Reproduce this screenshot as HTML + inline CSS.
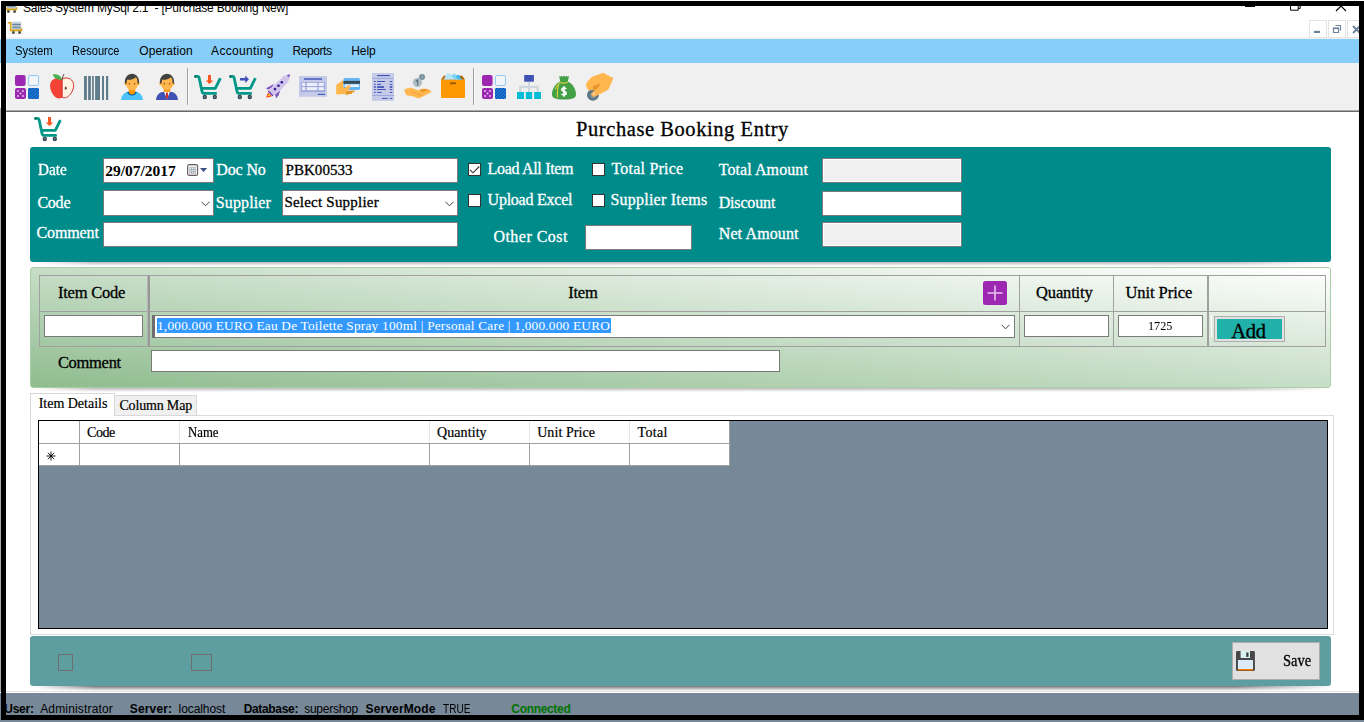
<!DOCTYPE html>
<html><head><meta charset="utf-8"><title>Purchase Booking New</title>
<style>
html,body{margin:0;padding:0;}
body{width:1364px;height:722px;overflow:hidden;background:#fff;position:relative;font-family:"Liberation Sans",sans-serif;}
.a{position:absolute;box-sizing:border-box;}
.t{position:absolute;white-space:pre;line-height:1;}
.sf{font-family:"Liberation Serif",serif;}
.k{-webkit-text-stroke:0.3px currentColor;}
.k2{-webkit-text-stroke:0.2px currentColor;}
.ss{font-family:"Liberation Sans",sans-serif;}
.inp{position:absolute;box-sizing:border-box;background:#fff;border:1px solid #7a7a7a;}
.ro{background:#f0f0f0;border:1px solid #7a7a7a;box-shadow:inset 0 0 0 1px #fff;}
.cb{position:absolute;box-sizing:border-box;width:13px;height:13px;background:#fff;border:1px solid #333;}
.gl{position:absolute;background:#a0a0a0;}
.ic{position:absolute;overflow:visible;}
</style></head>
<body>
<!-- outer desktop slivers -->
<div class="a" style="left:0;top:39px;width:1px;height:24px;background:#87cefa"></div>
<div class="a" style="left:0;top:108px;width:1px;height:584px;background:#ababab"></div>
<div class="a" style="left:0;top:693px;width:1364px;height:29px;background:#778899"></div>
<!-- black frame -->
<div class="a" style="left:1px;top:1px;width:1363px;height:719px;background:#000"></div>
<!-- window client -->
<div class="a" id="win" style="left:6px;top:6px;width:1353px;height:709px;background:#fff;overflow:hidden">
</div>
<!-- strips -->
<div class="a" style="left:6px;top:37px;width:1353px;height:2px;background:#f3f0ee"></div>
<div class="a" style="left:6px;top:39px;width:1353px;height:24px;background:#87cefa"></div>
<div class="a" style="left:6px;top:63px;width:1353px;height:47px;background:#f0f0f0"></div>
<div class="a" style="left:6px;top:63px;width:1px;height:47px;background:#fff"></div>
<div class="a" style="left:6px;top:110px;width:1353px;height:1px;background:#a9a9a9"></div>
<div class="a" style="left:6px;top:111px;width:1353px;height:1px;background:#696969"></div>
<!-- toolbar separators -->
<div class="a" style="left:187px;top:68px;width:1px;height:37px;background:#a0a0a0"></div>
<div class="a" style="left:188px;top:68px;width:1px;height:37px;background:#fafafa"></div>
<div class="a" style="left:473px;top:68px;width:1px;height:37px;background:#a0a0a0"></div>
<div class="a" style="left:474px;top:68px;width:1px;height:37px;background:#fafafa"></div>
<!-- MDI buttons -->
<div class="a" style="left:1309px;top:20px;width:18px;height:18px;border:1px solid #e3e3e3;background:#fff"></div>
<div class="a" style="left:1328px;top:20px;width:18px;height:18px;border:1px solid #e3e3e3;background:#fff"></div>
<div class="a" style="left:1347px;top:20px;width:12px;height:18px;border:1px solid #e3e3e3;border-right:0;background:#fff"></div>
<!-- title icon (clipped) + MDI icon -->
<svg width="0" height="0" style="position:absolute"><defs><g id="appico">
<rect x="5.200" y=".9" width="8.500" height="7.800" fill="#aebfcd"/>
<rect x="5.200" y=".9" width="8.500" height="1" fill="#cfdbe4"/>
<rect x="5.200" y="3" width="8.500" height=".8" fill="#56788f"/><rect x="5.200" y="5.800" width="8.500" height=".8" fill="#56788f"/>
<path d="M.8 1.100H4.500V8.400H13.700V7H15.100V10.300H2.900V2.500H.8Z" fill="#d9a514"/>
<rect x="5.200" y="10.300" width="2.400" height="2.400" fill="#3b3a22"/><rect x="11.400" y="10.300" width="2.400" height="2.400" fill="#3b3a22"/>
</g></defs></svg>
<div class="a" style="left:6px;top:6px;width:14px;height:8px;overflow:hidden"><svg class="ic" style="left:-4.300px;top:-5.600px" width="16" height="14" viewBox="0 0 16 14"><use href="#appico"/></svg></div>
<svg class="ic" style="left:7px;top:21px" width="16" height="14" viewBox="0 0 16 14"><rect x=".3" y=".2" width="15.400" height="13.600" fill="#f6f6f6"/><use href="#appico"/></svg>
<!-- window controls (clipped by frame) -->
<svg class="ic" style="left:1240px;top:0px" width="116" height="14" viewBox="0 0 116 14">
<rect x="5" y="5" width="10" height="2" fill="#000"/>
<path d="M50.5 4V10.2H58.2V4M58.2 8.4H60.2V4" fill="none" stroke="#000" stroke-width="1"/>
<path d="M96 11L101 6L106 11" fill="none" stroke="#000" stroke-width="1.1"/>
</svg>
<!-- MDI button glyphs -->
<svg class="ic" style="left:1309px;top:20px" width="50" height="18" viewBox="0 0 50 18">
<rect x="5" y="10.8" width="6" height="2.2" fill="#6d8199"/>
<path d="M26.5 5.5H31.5V10.5" fill="none" stroke="#6d8199" stroke-width="1.2"/>
<path d="M24.5 8.3H29.5V12.5H24.5Z" fill="none" stroke="#6d8199" stroke-width="1.2"/><rect x="24" y="7.5" width="6" height="1.6" fill="#6d8199"/>
<path d="M44 6L51 13M51 6L44 13" fill="none" stroke="#6d8199" stroke-width="1.8"/>
</svg>
<!-- toolbar icons -->
<svg width="0" height="0" style="position:absolute"><defs>
<pattern id="hat" width="2.2" height="2.2" patternUnits="userSpaceOnUse" patternTransform="rotate(-45)"><rect width="2.2" height="2.2" fill="#1e88e5"/><rect width="2.2" height="1" fill="#0d47a1"/></pattern>
<g id="dash">
<rect x="0" y="0" width="10.6" height="11" rx="2" fill="#9c27b0"/>
<rect x="13.5" y="0.5" width="10" height="10" rx="1.6" fill="#f1f5fa" stroke="#90caf9" stroke-width="1"/>
<rect x="0" y="13" width="11" height="11" rx="2" fill="#9c27b0"/>
<g fill="#ecd0f1"><rect x="2.2" y="15.2" width="1.6" height="1.6"/><rect x="7.2" y="15.2" width="1.6" height="1.6"/><rect x="4.7" y="17.7" width="1.6" height="1.6"/><rect x="2.2" y="20.2" width="1.6" height="1.6"/><rect x="7.2" y="20.2" width="1.6" height="1.6"/></g>
<rect x="13" y="13" width="11" height="11" rx="1.2" fill="url(#hat)"/>
</g>
<g id="cart">
<path d="M1.2 1.4H3.4Q4.8 1.4 5.1 2.7L8 16.4Q8.4 18.4 10.2 18.4H22.8M7.4 13.3H21.3L26.4 3.2" fill="none" stroke="#009688" stroke-width="2.8" stroke-linejoin="round"/>
<circle cx="1.3" cy="1.4" r="1.25" fill="#00695c"/>
<circle cx="10.8" cy="22" r="2.2" fill="#37474f"/><circle cx="20.8" cy="22" r="2.2" fill="#37474f"/>
<circle cx="10.8" cy="22" r=".9" fill="#607d8b"/><circle cx="20.8" cy="22" r=".9" fill="#607d8b"/>
</g>
<g id="head">
<circle cx="4.600" cy="10.900" r="1.250" fill="#ffa726"/><circle cx="17.400" cy="10.900" r="1.250" fill="#ffa726"/>
<path d="M4.700 9.500C4.700 14 7.500 17.100 11 17.100S17.300 14 17.300 9.500C17.300 5.500 15 2.500 11 2.500S4.700 5.500 4.700 9.500Z" fill="#ffb74d"/>
<path d="M3.900 10.600C3.300 4.500 6.800 .7 11 .7C15.200 .7 18.700 4.500 18.100 10.600L16.500 10.600C16.600 8 16.300 6 15 4.300C12 6.500 8.500 7.200 6.100 6.700C5.700 8 5.600 9.300 5.700 10.600Z" fill="#424242"/>
<circle cx="8.400" cy="10.700" r=".75" fill="#784719"/><circle cx="13.600" cy="10.700" r=".75" fill="#784719"/>
</g>
</defs></svg>
<svg class="ic" style="left:15px;top:75px" width="24" height="24"><use href="#dash"/></svg>
<svg class="ic" style="left:482px;top:75px" width="24" height="24"><use href="#dash"/></svg>
<!-- apple -->
<svg class="ic" style="left:50px;top:74px" width="25" height="26" viewBox="0 0 25 26">
<path d="M12.200 5.200C8.500 3 3.500 3.800 1.200 7.500C-1.200 11.500 0.600 17.500 3.600 21.300C6.200 24.600 9 25.200 12.200 23.600Z" fill="#f44336"/>
<path d="M12.200 5C15.500 3.200 20.300 3.700 22.500 7.200C24.800 11 23.300 16.500 20.300 20.300C17.800 23.500 15 24.300 12.200 23.400Z" fill="#fff3e0" stroke="#d32f2f" stroke-width="1"/>
<path d="M12 5.600C11.500 2.500 8 -.3 2.800 .4C4 4.300 8 6.200 12 5.600Z" fill="#4caf50"/>
<path d="M12.200 5.500C12.500 3.500 13 1.800 13.900 .2" fill="none" stroke="#5d4037" stroke-width="1"/>
<path d="M15.700 12.300C17 13.800 17.300 15.300 15.700 15.800C14.100 15.300 14.400 13.800 15.700 12.300Z" fill="#5d4037"/>
</svg>
<!-- barcode -->
<svg class="ic" style="left:84px;top:76px" width="25" height="24" viewBox="0 0 25 24">
<g fill="#607d8b"><rect x="0" y="0" width="2.9" height="24"/><rect x="4.100" y="0" width="2.8" height="24"/><rect x="8.100" y="0" width="1.700" height="24"/><rect x="11.100" y="0" width="4.900" height="24"/><rect x="18" y="0" width="2" height="24"/><rect x="22" y="0" width="2.200" height="24"/></g>
</svg>
<!-- person -->
<svg class="ic" style="left:121px;top:73px" width="22" height="28" viewBox="0 0 22 28">
<path d="M.1 27C.1 22 4 18.800 8 18.800H14C18 18.800 21.900 22 21.900 27Z" fill="#4fc3f7"/>
<path d="M6.300 18.800C6.500 23.600 15.500 23.600 15.700 18.800Z" fill="#01579b"/>
<path d="M7.800 15V19C7.800 22.200 14.200 22.200 14.200 19V15Z" fill="#ff9800"/>
<use href="#head"/>
</svg>
<!-- businessman -->
<svg class="ic" style="left:156px;top:73px" width="22" height="28" viewBox="0 0 22 28">
<path d="M.1 27C.1 22 4 18.800 8 18.800H14C18 18.800 21.900 22 21.900 27Z" fill="#3f51b5"/>
<path d="M8 18.800H14L11 25.900Z" fill="#fff"/>
<path d="M10.100 19.600H11.900L12.200 24.300L11 25.900L9.800 24.300Z" fill="#d32f2f"/>
<rect x="7.800" y="15" width="6.400" height="3.800" fill="#ff9800"/>
<use href="#head"/>
</svg>
<!-- cart down -->
<svg class="ic" style="left:194px;top:75px" width="28" height="25" viewBox="0 0 28 25"><use href="#cart"/>
<path d="M14 0H17V5.500H19.300L15.500 9L11.700 5.500H14Z" fill="#ff5722"/></svg>
<!-- cart right -->
<svg class="ic" style="left:229px;top:75px" width="28" height="25" viewBox="0 0 28 25"><use href="#cart"/>
<path d="M11 3H16.200V.4L20 4.200L16.200 8V5.400H11Z" fill="#3f51b5"/></svg>
<!-- rocket -->
<svg class="ic" style="left:265px;top:74px" width="26" height="25" viewBox="0 0 26 25">
<path d="M8.900 9.900L1 14.300L3.200 15.800L7 13.200Z" fill="#7e57c2"/>
<path d="M15.400 16.200L13.500 21.600L11.100 24.200L10 20.400Z" fill="#7e57c2"/>
<path d="M1.200 23.700L3.100 18.500L7 22.200Z" fill="#ff3d00"/><path d="M2.700 22.300L3.900 20L5.500 21.800Z" fill="#ffeb3b"/>
<path d="M25 .2C22 .6 19.500 1.500 18.100 2.500L3.500 16.800L8.100 21.800L15 16.400C19 13 23 8.500 23.900 6C24.600 4 24.900 2 25 .2Z" fill="#d1c4e9"/>
<path d="M25 .2L21.700 1.300L24.200 3.500Z" fill="#7e57c2"/>
<path d="M3.300 17L7.900 21.900" stroke="#5e35b1" stroke-width="1.300"/>
<circle cx="16.800" cy="8.300" r="1.300" fill="#311b92"/><circle cx="13.500" cy="11.800" r="1.300" fill="#311b92"/><circle cx="10" cy="15.100" r="1.300" fill="#311b92"/>
</svg>
<!-- invoice table -->
<svg class="ic" style="left:299px;top:76px" width="28" height="21" viewBox="0 0 28 21">
<rect width="28" height="20.800" fill="#c5cae9"/><rect x="4.900" y="2.100" width="18.200" height="1.800" fill="#5c6bc0"/>
<rect x="1.900" y="6" width="24.200" height="10" fill="#9fa8da"/>
<g fill="#eceefa"><rect x="3.100" y="6.900" width="3.200" height="3.100"/><rect x="7.800" y="6.900" width="10.500" height="3.100"/><rect x="19.600" y="6.900" width="5.300" height="3.100"/><rect x="3.100" y="11.100" width="3.200" height="3.100"/><rect x="7.800" y="11.100" width="10.500" height="3.100"/><rect x="19.600" y="11.100" width="5.300" height="3.100"/></g>
<rect x="18.800" y="17.800" width="7.300" height="1.100" fill="#3f51b5"/>
</svg>
<!-- hand with card -->
<svg class="ic" style="left:336px;top:78px" width="25" height="17" viewBox="0 0 25 17">
<path d="M9.100 12.800L18.700 12.400L18.300 14.300L16 14.700L15.600 15.900L12.500 16L12.100 16.800H9.500Z" fill="#e69329"/>
<rect x="7.400" y=".1" width="16.600" height="11.900" rx="1.600" fill="#64b5f6"/><rect x="7.400" y="2.900" width="16.600" height="2.900" fill="#37474f"/><rect x="8.800" y="6.400" width="14.200" height="2.600" fill="#e3f2fd"/>
<path d="M.2 7L6.800 2L7.500 10.100H8.700L11.800 7.400C13 6.500 15.300 7 14.800 9.300L10.200 14.300L8.700 15.900L.2 16.600Z" fill="#ffb74d"/>
<ellipse cx="13.800" cy="8.100" rx="1.100" ry=".8" fill="#ffcdd2" transform="rotate(-30 13.800 8.100)"/>
</svg>
<!-- receipt -->
<svg class="ic" style="left:372px;top:73px" width="22" height="28" viewBox="0 0 22 28">
<rect width="22" height="27.800" fill="#c5cae9"/><rect y="4.900" width="22" height="1" fill="#9fa8da"/><rect y="22" width="22" height="1" fill="#9fa8da"/>
<g fill="#3f51b5"><rect x="5.100" y="2" width="12.700" height="1.100"/>
<rect x="2" y="8" width="1.700" height="1"/><rect x="5.100" y="8" width="7.900" height="1"/><rect x="17.800" y="8" width="2.500" height="1"/>
<rect x="2" y="10.900" width="1.700" height="1"/><rect x="5.100" y="10.900" width="3.900" height="1"/><rect x="17.800" y="10.900" width="2.500" height="1"/>
<rect x="2" y="13.200" width="1.700" height="1.700"/><rect x="5.100" y="13.200" width="6.900" height="1.700"/><rect x="17.800" y="13.200" width="2.500" height="1.700"/>
<rect x="2" y="16" width="1.700" height="1"/><rect x="5.100" y="16" width="8.700" height="1"/><rect x="17.800" y="16" width="2.500" height="1"/>
<rect x="2" y="18.900" width="1.700" height="1"/><rect x="5.100" y="18.900" width="4.700" height="1"/><rect x="17.800" y="18.900" width="2.500" height="1"/>
<rect x="9.900" y="24.900" width="5.800" height="1"/><rect x="17.800" y="24.900" width="2.500" height="1"/></g>
</svg>
<!-- hand with coins -->
<svg class="ic" style="left:404px;top:74px" width="28" height="25" viewBox="0 0 28 25">
<circle cx="18" cy="2.900" r="3" fill="#78909c"/><rect x="17.700" y="1.400" width=".9" height="2.600" fill="#b0bec5"/>
<circle cx="13.400" cy="8.600" r="4.600" fill="#b0bec5"/><path d="M11.700 7.400L13.700 6V11.400" fill="none" stroke="#546e7a" stroke-width="1.200"/>
<path d="M.4 16L2.700 14.700L7 14L14 16.500L16 15.800L18.600 15L22.700 15.200L26.300 16.500L27 18.100L15 24L12.900 23.700L8.800 21.900L2.700 21.100L.9 17.500Z" fill="#ffb74d" stroke="#ffb74d" stroke-width=".6" stroke-linejoin="round"/>
<path d="M16 15.800L18.600 15L22.700 15.200L24.700 16L18.600 18.600L16.500 17.500Z" fill="#eb9a30"/>
<path d="M8.300 18.300L17.500 21.400" stroke="#e69329" stroke-width=".9" stroke-dasharray="1.400 .7"/>
</svg>
<!-- box -->
<svg class="ic" style="left:441px;top:72px" width="24" height="27" viewBox="0 0 24 27">
<path d="M0 7.700L2.800 3.700H21.300L24 7.700Z" fill="#b26500"/>
<path d="M2.600 7.700L6.200 .8L21.200 7.700Z" fill="#b3e5fc"/><path d="M10.200 3.900L13.100 1.300L20.500 7.700H14Z" fill="#81d4fa"/><path d="M14.700 4.300L17.400 2.600L21.200 7.700H17.500Z" fill="#3db8f5"/>
<rect x="0" y="7.700" width="24" height="18.300" rx="1" fill="#ff9800"/>
<rect x="8.800" y="10.300" width="6.400" height="1.900" rx=".9" fill="#9c5a00"/>
</svg>
<!-- flowchart -->
<svg class="ic" style="left:517px;top:75px" width="24" height="24" viewBox="0 0 24 24">
<g fill="#cfd8dc"><rect x="11" y="6.700" width="2" height="10.300"/><rect x="2.100" y="10.800" width="19.800" height="2.300"/><rect x="2.100" y="10.800" width="2.400" height="6.200"/><rect x="19.500" y="10.800" width="2.400" height="6.200"/></g>
<rect x="7.200" y="0" width="9.700" height="6.700" fill="#3f51b5"/>
<g fill="#00bcd4"><rect x="0" y="17" width="7" height="7"/><rect x="8.800" y="17" width="6.300" height="7"/><rect x="17.200" y="17" width="6.800" height="7"/></g>
</svg>
<!-- money bag -->
<svg class="ic" style="left:552px;top:75px" width="24" height="25" viewBox="0 0 24 25">
<path d="M7 .9L8.300 1.700L9.500 .8L10.800 1.700L12 .8L13.200 1.700L14.500 .8L15.700 1.700L17.100 .9L15.800 6.500C21 9 24 14 24 19.500C24 23 21 24.500 12 24.500S0 23 0 19.500C0 14 3 9 8.300 6.500Z" fill="#43a047"/>
<path d="M15.900 7.300C13 8.300 10.500 8.300 8.300 7.600C5.500 9.500 4 12 3.400 14.400M6.600 9.200C5.500 13 5.200 18 5.300 22.500" fill="none" stroke="#fdd835" stroke-width="1"/>
<path d="M14.300 13.800C13 12.600 9.800 12.800 9.800 14.700C9.800 16.800 14.200 16 14.200 18.300C14.200 20.300 10.800 20.300 9.500 19M12 11.200V21.800" fill="none" stroke="#fff" stroke-width="1.650"/>
</svg>
<!-- hand with coin -->
<svg class="ic" style="left:586px;top:73px" width="28" height="28" viewBox="0 0 28 28">
<circle cx="6.900" cy="21.900" r="5.900" fill="#5b7684"/><circle cx="7.200" cy="22.400" r="3" fill="#7b929e"/>
<path d="M0 12.400C.5 10.500 1.200 9.500 2.100 8.300C3.500 6.500 4.500 5 6.200 3.900L17.200 .1L27 5.200L26.200 7.300L22.100 16.500L13.400 21.100L8.700 23.400C7.500 23.800 6.500 23.500 6.200 22.700C5.600 22 5.300 21.300 5.400 20.600L9.300 17L6.200 16.800L2.600 17.300Z" fill="#ffb74d" stroke="#ffb74d" stroke-width=".5" stroke-linejoin="round"/>
<path d="M6.600 13.800L14.300 10.300L12.900 13.500L9.600 16.800L7.200 16.300Z" fill="#e69329"/>
<ellipse cx="8" cy="20.600" rx=".9" ry="1.300" fill="#ffcdd2" transform="rotate(20 8 20.600)"/>
</svg>

<!-- teal panel -->
<div class="a" style="left:35px;top:262px;width:1298px;height:4px;background:linear-gradient(to bottom,rgba(90,90,90,.42),rgba(90,90,90,0));-webkit-mask-image:linear-gradient(to right,transparent 0,#000 60px,#000 1200px,transparent 100%);mask-image:linear-gradient(to right,transparent 0,#000 60px,#000 1200px,transparent 100%)"></div>
<div class="a" style="left:30px;top:147px;width:1301px;height:115px;background:#008b8b;border-radius:3px"></div>
<div class="inp" style="left:103px;top:158px;width:111px;height:25px"></div>
<div class="inp" style="left:282px;top:158px;width:176px;height:25px"></div>
<div class="inp" style="left:103px;top:190px;width:111px;height:26px"></div>
<div class="inp" style="left:282px;top:190px;width:176px;height:26px"></div>
<div class="inp" style="left:103px;top:222px;width:355px;height:25px"></div>
<div class="inp" style="left:585px;top:225px;width:107px;height:25px"></div>
<div class="inp ro" style="left:822px;top:158px;width:140px;height:25px"></div>
<div class="inp" style="left:822px;top:191px;width:140px;height:25px"></div>
<div class="inp ro" style="left:822px;top:222px;width:140px;height:25px"></div>
<div class="cb" style="left:468px;top:163px"></div>
<div class="cb" style="left:592px;top:163px"></div>
<div class="cb" style="left:468px;top:194px"></div>
<div class="cb" style="left:592px;top:194px"></div>
<!-- green panel -->
<div class="a" style="left:35px;top:388px;width:1298px;height:4px;background:linear-gradient(to bottom,rgba(90,90,90,.42),rgba(90,90,90,0));-webkit-mask-image:linear-gradient(to right,transparent 0,#000 60px,#000 1200px,transparent 100%);mask-image:linear-gradient(to right,transparent 0,#000 60px,#000 1200px,transparent 100%)"></div>
<div class="a" style="left:30px;top:267px;width:1301px;height:121px;border:1px solid #a9cfa7;border-radius:3px;background:linear-gradient(to top right,#8fbc8f,#ffffff)"></div>
<!-- table lines -->
<div class="gl" style="left:39px;top:275px;width:1287px;height:1px"></div>
<div class="gl" style="left:39px;top:311px;width:1287px;height:1px"></div>
<div class="gl" style="left:39px;top:346px;width:1287px;height:1px"></div>
<div class="gl" style="left:39px;top:275px;width:1px;height:72px"></div>
<div class="gl" style="left:147px;top:275px;width:1px;height:72px;background:#b4b4b4"></div>
<div class="gl" style="left:148px;top:275px;width:2px;height:72px;background:#979797"></div>
<div class="gl" style="left:1019px;top:275px;width:1px;height:72px"></div>
<div class="gl" style="left:1113px;top:275px;width:1px;height:72px"></div>
<div class="gl" style="left:1207px;top:275px;width:2px;height:72px"></div>
<div class="gl" style="left:1325px;top:275px;width:1px;height:72px"></div>
<!-- green inputs -->
<div class="inp" style="left:44px;top:315px;width:99px;height:22px"></div>
<div class="inp" style="left:152px;top:315px;width:863px;height:23px;border-left:3px solid #6d6d6d"></div>
<div class="a" style="left:157px;top:318px;width:454px;height:15px;background:#3399ff"></div>
<div class="inp" style="left:1024px;top:315px;width:85px;height:22px"></div>
<div class="inp" style="left:1118px;top:315px;width:85px;height:22px"></div>
<div class="inp" style="left:151px;top:350px;width:629px;height:22px"></div>
<div class="a" style="left:1211px;top:315px;width:1px;height:22px;background:#fff"></div>
<div class="a" style="left:1214px;top:316px;width:71px;height:26px;border:1px solid #adadad;background:#e1e1e1"></div>
<div class="a" style="left:1217px;top:319px;width:65px;height:20px;background:#20b2aa"></div>
<!-- tabs -->
<div class="a" style="left:30px;top:415px;width:1304px;height:220px;border:1px solid #dcdcdc;background:#fff"></div>
<div class="a" style="left:114px;top:395px;width:83px;height:21px;border:1px solid #d9d9d9;background:#f0f0f0"></div>
<div class="a" style="left:30px;top:393px;width:85px;height:23px;border:1px solid #d9d9d9;border-bottom:0;background:#fff"></div>
<!-- grid -->
<div class="a" style="left:38px;top:420px;width:1290px;height:209px;border:1px solid #000;background:#778899"></div>
<div class="a" style="left:39px;top:421px;width:691px;height:45px;background:#fff"></div>
<div class="gl" style="left:39px;top:443px;width:691px;height:1px"></div>
<div class="gl" style="left:39px;top:465px;width:691px;height:1px"></div>
<div class="gl" style="left:79px;top:443px;width:1px;height:23px"></div>
<div class="gl" style="left:179px;top:443px;width:1px;height:23px"></div>
<div class="gl" style="left:429px;top:443px;width:1px;height:23px"></div>
<div class="gl" style="left:529px;top:443px;width:1px;height:23px"></div>
<div class="gl" style="left:629px;top:443px;width:1px;height:23px"></div>
<div class="gl" style="left:729px;top:421px;width:1px;height:45px"></div>
<div class="gl" style="left:79px;top:421px;width:1px;height:22px"></div>
<div class="gl" style="left:179px;top:421px;width:1px;height:22px;background:#e5e5e5"></div>
<div class="gl" style="left:429px;top:421px;width:1px;height:22px;background:#e5e5e5"></div>
<div class="gl" style="left:529px;top:421px;width:1px;height:22px;background:#e5e5e5"></div>
<div class="gl" style="left:629px;top:421px;width:1px;height:22px;background:#e5e5e5"></div>
<!-- footer panel -->
<div class="a" style="left:35px;top:686px;width:1298px;height:5px;background:linear-gradient(to bottom,rgba(50,50,50,.68),rgba(90,90,90,0));-webkit-mask-image:linear-gradient(to right,transparent 0,#000 60px,#000 1200px,transparent 100%);mask-image:linear-gradient(to right,transparent 0,#000 60px,#000 1200px,transparent 100%)"></div>
<div class="a" style="left:30px;top:636px;width:1301px;height:50px;background:#5f9ea0;border-radius:3px"></div>
<div class="a" style="left:58px;top:654px;width:15px;height:17px;border:1px solid #6e6e6e"></div>
<div class="a" style="left:191px;top:654px;width:21px;height:17px;border:1px solid #6e6e6e"></div>
<div class="a" style="left:1232px;top:642px;width:88px;height:38px;border:1px solid #adadad;background:#e1e1e1"></div>
<!-- status bar -->
<div class="a" style="left:6px;top:691px;width:1353px;height:1px;background:#e3e3e3"></div>
<div class="a" style="left:6px;top:692px;width:1353px;height:1px;background:#fff"></div>
<div class="a" style="left:6px;top:693px;width:1353px;height:22px;background:#778899"></div>
<span class="t ss" id="ttl" style="left:23.00px;top:2px;font-size:12px;letter-spacing:-0.215px;color:#000;">Sales System MySql 2.1  - [Purchase Booking New]</span>
<span class="t ss" id="m1" style="left:15.20px;top:45px;font-size:12px;letter-spacing:0.000px;color:#000;transform:scaleX(0.9397);transform-origin:0 0;">System</span>
<span class="t ss" id="m2" style="left:72.40px;top:45px;font-size:12px;letter-spacing:0.000px;color:#000;transform:scaleX(0.9249);transform-origin:0 0;">Resource</span>
<span class="t ss" id="m3" style="left:139.30px;top:45px;font-size:12px;letter-spacing:0.084px;color:#000;">Operation</span>
<span class="t ss" id="m4" style="left:211.10px;top:45px;font-size:12px;letter-spacing:0.322px;color:#000;">Accounting</span>
<span class="t ss" id="m5" style="left:292.40px;top:45px;font-size:12px;letter-spacing:-0.403px;color:#000;">Reports</span>
<span class="t ss" id="m6" style="left:351.30px;top:45px;font-size:12px;letter-spacing:-0.102px;color:#000;">Help</span>
<span class="t sf k" id="h1" style="left:576.10px;top:119px;font-size:20.5px;letter-spacing:0.564px;color:#000;">Purchase Booking Entry</span>
<span class="t sf k" id="l1" style="left:38.40px;top:162px;font-size:16px;letter-spacing:0.000px;color:#fff;transform:scaleX(0.9534);transform-origin:0 0;">Date</span>
<span class="t sf k" id="l2" style="left:37.40px;top:195px;font-size:16px;letter-spacing:-0.224px;color:#fff;">Code</span>
<span class="t sf k" id="l3" style="left:36.50px;top:225px;font-size:16px;letter-spacing:-0.111px;color:#fff;">Comment</span>
<span class="t sf k" id="l4" style="left:216.30px;top:162px;font-size:16px;letter-spacing:-0.142px;color:#fff;">Doc No</span>
<span class="t sf k" id="l5" style="left:215.80px;top:195px;font-size:16px;letter-spacing:0.130px;color:#fff;">Supplier</span>
<span class="t sf k" id="l6" style="left:487.60px;top:161px;font-size:16px;letter-spacing:-0.316px;color:#fff;">Load All Item</span>
<span class="t sf k" id="l7" style="left:611.50px;top:161px;font-size:16px;letter-spacing:0.208px;color:#fff;">Total Price</span>
<span class="t sf k" id="l8" style="left:487.60px;top:192px;font-size:16px;letter-spacing:-0.243px;color:#fff;">Upload Excel</span>
<span class="t sf k" id="l9" style="left:610.50px;top:192px;font-size:16px;letter-spacing:0.220px;color:#fff;">Supplier Items</span>
<span class="t sf k" id="l10" style="left:493.40px;top:229px;font-size:16px;letter-spacing:0.475px;color:#fff;">Other Cost</span>
<span class="t sf k" id="l11" style="left:718.70px;top:162px;font-size:16px;letter-spacing:0.087px;color:#fff;">Total Amount</span>
<span class="t sf k" id="l12" style="left:718.70px;top:195px;font-size:16px;letter-spacing:-0.161px;color:#fff;">Discount</span>
<span class="t sf k" id="l13" style="left:718.70px;top:226px;font-size:16px;letter-spacing:0.133px;color:#fff;">Net Amount</span>
<span class="t sf" id="v1" style="left:105.30px;top:163px;font-size:15.5px;letter-spacing:-0.018px;color:#000;font-weight:700;">29/07/2017</span>
<span class="t sf k" id="v2" style="left:285.60px;top:163px;font-size:15px;letter-spacing:0.031px;color:#000;">PBK00533</span>
<span class="t sf k" id="v3" style="left:284.40px;top:195px;font-size:15px;letter-spacing:0.219px;color:#000;">Select Supplier</span>
<span class="t sf k" id="g1" style="left:57.90px;top:285px;font-size:16.5px;letter-spacing:-0.208px;color:#000;">Item Code</span>
<span class="t sf k" id="g2" style="left:568.20px;top:285px;font-size:16.5px;letter-spacing:-0.201px;color:#000;">Item</span>
<span class="t sf k" id="g3" style="left:1036.00px;top:285px;font-size:16.5px;letter-spacing:-0.142px;color:#000;">Quantity</span>
<span class="t sf k" id="g4" style="left:1125.40px;top:285px;font-size:16.5px;letter-spacing:-0.049px;color:#000;">Unit Price</span>
<span class="t sf k" id="g5" style="left:57.90px;top:355px;font-size:16.5px;letter-spacing:-0.300px;color:#000;">Comment</span>
<span class="t sf" id="g6" style="left:157.00px;top:319px;font-size:13.3px;letter-spacing:0.225px;color:#fff;">1,000.000 EURO Eau De Toilette Spray 100ml | Personal Care | 1,000.000 EURO</span>
<span class="t sf" id="g7" style="left:1148.06px;top:319px;font-size:13px;letter-spacing:0.000px;color:#000;transform:scaleX(0.9388);transform-origin:0 0;">1725</span>
<span class="t sf k" id="g8" style="left:1231.30px;top:321px;font-size:20.5px;letter-spacing:-0.327px;color:#000;">Add</span>
<span class="t sf k2" id="t1" style="left:38.70px;top:397px;font-size:14px;letter-spacing:-0.015px;color:#000;">Item Details</span>
<span class="t sf k2" id="t2" style="left:119.40px;top:399px;font-size:14px;letter-spacing:-0.164px;color:#000;">Column Map</span>
<span class="t sf k2" id="c1" style="left:87.00px;top:426px;font-size:14px;letter-spacing:-0.446px;color:#000;">Code</span>
<span class="t sf k2" id="c2" style="left:187.60px;top:426px;font-size:14px;letter-spacing:0.000px;color:#000;transform:scaleX(0.9123);transform-origin:0 0;">Name</span>
<span class="t sf k2" id="c3" style="left:437.00px;top:426px;font-size:14px;letter-spacing:0.087px;color:#000;">Quantity</span>
<span class="t sf k2" id="c4" style="left:537.20px;top:426px;font-size:14px;letter-spacing:0.073px;color:#000;">Unit Price</span>
<span class="t sf k2" id="c5" style="left:637.50px;top:426px;font-size:14px;letter-spacing:0.306px;color:#000;">Total</span>
<span class="t sf k" id="sv" style="left:1283.20px;top:653px;font-size:16px;letter-spacing:0.000px;color:#000;transform:scaleX(0.9033);transform-origin:0 0;">Save</span>
<span class="t ss" id="s1" style="left:4.20px;top:703px;font-size:12px;letter-spacing:-0.221px;color:#000;font-weight:700;">User:</span>
<span class="t ss" id="s2" style="left:40.20px;top:703px;font-size:12px;letter-spacing:0.159px;color:#000;">Administrator</span>
<span class="t ss" id="s3" style="left:129.80px;top:703px;font-size:12px;letter-spacing:0.156px;color:#000;font-weight:700;">Server:</span>
<span class="t ss" id="s4" style="left:178.60px;top:703px;font-size:12px;letter-spacing:-0.091px;color:#000;">localhost</span>
<span class="t ss" id="s5" style="left:243.70px;top:703px;font-size:12px;letter-spacing:-0.333px;color:#000;font-weight:700;">Database:</span>
<span class="t ss" id="s6" style="left:304.20px;top:703px;font-size:12px;letter-spacing:-0.258px;color:#000;">supershop</span>
<span class="t ss" id="s7" style="left:365.50px;top:703px;font-size:12px;letter-spacing:0.142px;color:#000;font-weight:700;">ServerMode</span>
<span class="t ss" id="s8" style="left:443.30px;top:703px;font-size:12px;letter-spacing:0.000px;color:#000;transform:scaleX(0.8389);transform-origin:0 0;">TRUE</span>
<span class="t ss" id="s9" style="left:511.30px;top:703px;font-size:12px;letter-spacing:-0.322px;color:#007400;font-weight:700;">Connected</span>
<!-- form cart icon -->
<svg class="ic" style="left:34px;top:117px" width="28" height="25" viewBox="0 0 28 25"><use href="#cart"/>
<path d="M14 0H17V5.500H19.300L15.500 9L11.700 5.500H14Z" fill="#ff5722"/></svg>
<!-- calendar + arrow -->
<svg class="ic" style="left:187px;top:164px" width="22" height="13" viewBox="0 0 22 13">
<rect x=".6" y=".6" width="10" height="10.800" rx="1.500" fill="#eef1f8" stroke="#6b5a5a" stroke-width="1.100"/>
<rect x="2.300" y="3.200" width="6.600" height="6.600" fill="#aeb2bd"/>
<g fill="#f4f6fb"><rect x="3" y="4" width="1" height="1"/><rect x="5.100" y="4" width="1" height="1"/><rect x="7.200" y="4" width="1" height="1"/><rect x="3" y="6.100" width="1" height="1"/><rect x="5.100" y="6.100" width="1" height="1"/><rect x="7.200" y="6.100" width="1" height="1"/><rect x="3" y="8.200" width="1" height="1"/><rect x="5.100" y="8.200" width="1" height="1"/><rect x="7.200" y="8.200" width="1" height="1"/></g>
<path d="M13 4H20.200L16.600 8Z" fill="#3b4f81"/>
</svg>
<!-- combo chevrons -->
<svg class="ic" style="left:201px;top:201px" width="9" height="6" viewBox="0 0 9 6"><path d="M.5 .8L4.500 4.800L8.500 .8" fill="none" stroke="#444" stroke-width="1"/></svg>
<svg class="ic" style="left:445px;top:201px" width="9" height="6" viewBox="0 0 9 6"><path d="M.5 .8L4.500 4.800L8.500 .8" fill="none" stroke="#444" stroke-width="1"/></svg>
<svg class="ic" style="left:1001px;top:324px" width="9" height="6" viewBox="0 0 9 6"><path d="M.5 .8L4.500 4.800L8.500 .8" fill="none" stroke="#444" stroke-width="1"/></svg>
<!-- checkmark -->
<svg class="ic" style="left:468px;top:163px" width="13" height="13" viewBox="0 0 13 13"><path d="M2 6.800L5 9.800L11.300 3.500" fill="none" stroke="#333" stroke-width="1.100"/></svg>
<!-- plus button -->
<svg class="ic" style="left:983px;top:281px" width="24" height="24" viewBox="0 0 24 24"><rect width="24" height="24" rx="2.500" fill="#9c27b0"/><path d="M12 4.500V19.500M4.500 12H19.500" stroke="#e6c3ec" stroke-width="1.600"/></svg>
<!-- row star -->
<svg class="ic" style="left:46px;top:451px" width="10" height="10" viewBox="0 0 10 10"><path d="M5 .5V9.500M.5 5H9.500M1.800 1.800L8.200 8.200M8.200 1.800L1.800 8.200" stroke="#000" stroke-width=".9"/></svg>
<!-- floppy -->
<svg class="ic" style="left:1236px;top:651px" width="19" height="20" viewBox="0 0 19 20">
<rect x="0" y="0" width="18.900" height="19.900" rx="1.300" fill="#474747"/>
<rect x="4.600" y="0" width="9.400" height="7" fill="#d9f2f2"/><rect x="10.300" y="1.500" width="2.200" height="4.400" fill="#3a3a3a"/>
<rect x="1.900" y="9" width="15.100" height="9.200" fill="#dcebfa"/><rect x="1.900" y="18" width="15.100" height="1.500" fill="#f57c00"/>
</svg>

<!-- frame overlays (clip text) -->
<div class="a" style="left:1px;top:1px;width:1363px;height:5px;background:#000"></div>
<div class="a" style="left:1px;top:1px;width:5px;height:719px;background:#000"></div>
<div class="a" style="left:1px;top:715px;width:1363px;height:5px;background:#000"></div>
<div class="a" style="left:1359px;top:1px;width:5px;height:719px;background:#000"></div>
</body></html>
